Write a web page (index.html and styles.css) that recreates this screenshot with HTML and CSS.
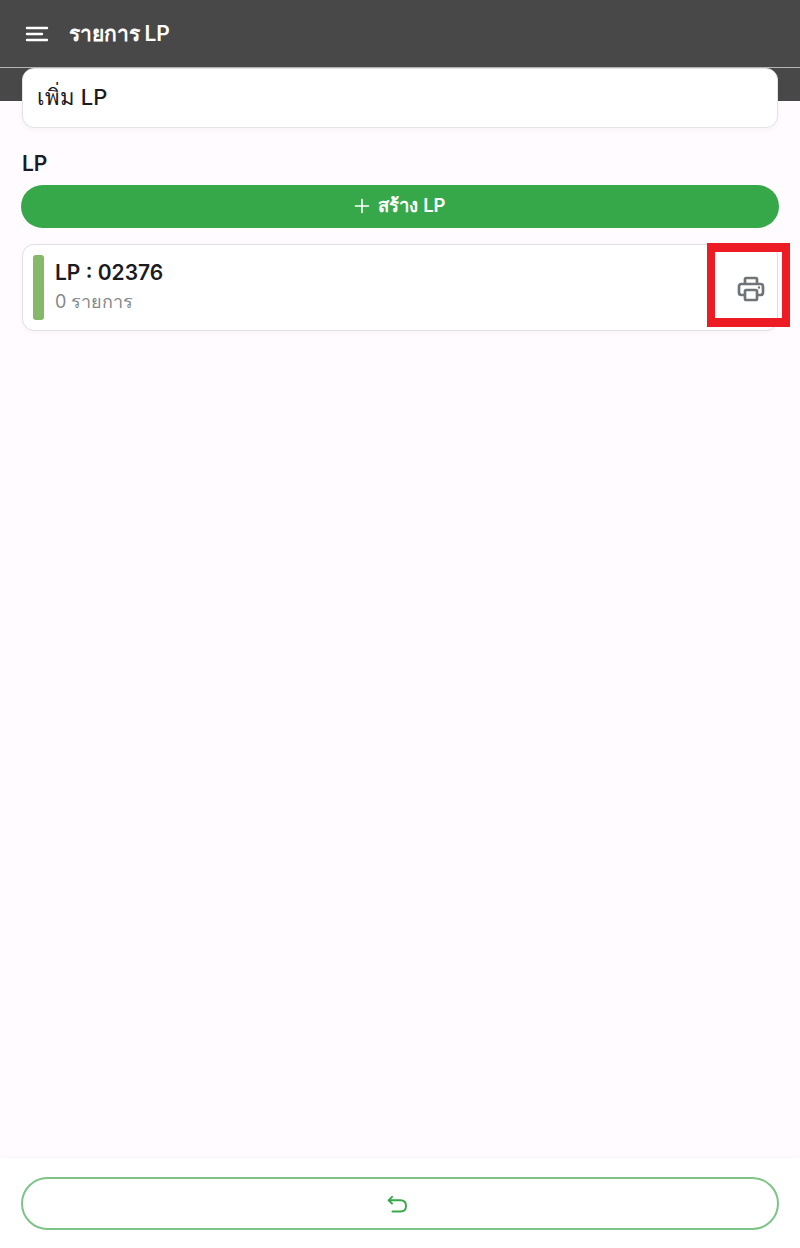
FILE: index.html
```html
<!DOCTYPE html>
<html lang="th">
<head>
    <meta charset="UTF-8">
    <meta name="viewport" content="width=device-width, initial-scale=1.0">
    <title>รายการ LP</title>
    <link rel="stylesheet" href="styles.css">
</head>
<body>
    <div class="page">
        <!-- Top bar -->
        <header class="topbar">
            <svg class="menu-icon" width="24" height="16" viewBox="0 0 24 16" fill="none" stroke="#fff" stroke-width="2.4" stroke-linecap="round">
                <path d="M2 2H22M2 8H17M2 14H22"/>
            </svg>
            <span class="topbar-title">รายการ LP</span>
        </header>
        <div class="topbar-band"></div>

        <main class="content">
            <div class="add-card">เพิ่ม LP</div>

            <h2 class="section-title">LP</h2>
            <button class="create-btn" type="button">
                <svg width="16" height="16" viewBox="0 0 16 16" fill="none" stroke="#fff" stroke-width="1.6" stroke-linecap="round">
                    <path d="M8 1.5V14.5M1.5 8H14.5"/>
                </svg>
                <span>สร้าง LP</span>
            </button>

            <!-- LP list -->
            <div class="lp-card">
                <div class="lp-bar"></div>
                <div class="lp-info">
                    <div class="lp-name">LP : 02376</div>
                    <div class="lp-count">0 รายการ</div>
                </div>
                <svg class="print-icon" width="28" height="28" viewBox="0 0 28 28" fill="none" stroke="#6f7478" stroke-width="2.7" stroke-linejoin="round">
                    <path d="M8 9V4.2C8 3.5 8.5 3 9.2 3H18.8C19.5 3 20 3.5 20 4.2V9"/>
                    <path d="M8 20H4.5C3.1 20 2 18.9 2 17.5V11.5C2 10.100 3.100 9 4.500 9H23.500C24.900 9 26 10.100 26 11.500V17.500C26 18.900 24.900 20 23.500 20H20"/>
                    <rect x="8" y="15" width="12" height="10" rx="1.200"/>
                    <circle cx="22" cy="12.500" r="0.600" fill="#6f7478" stroke-width="1.200"/>
                </svg>
                <div class="highlight-box"></div>
            </div>
        </main>

        <footer class="footer">
            <button class="back-btn" type="button">
                <svg class="back-icon" width="22" height="22" viewBox="0 0 22 22" fill="none" stroke="#37a84a" stroke-width="1.900" stroke-linecap="round" stroke-linejoin="round">
                    <path d="M5 3.800L1.600 7.300L5 10.500"/>
                    <path d="M2 7.300H13.500C17 7.300 19 9.500 19 13C19 16.300 17 18.500 13.500 18.500H5.500"/>
                </svg>
            </button>
        </footer>
    </div>
</body>
</html>
```
FILE: styles.css
```css
* {
    box-sizing: border-box;
}
body {
    margin: 0;
    font-family: Inter, "Noto Sans", sans-serif;
    background-color: #fffbff;
    color: #1c1b1f;
}
.page {
    height: 1248px;
    display: flex;
    flex-direction: column;
    overflow: hidden;
}
.topbar {
    height: 68px;
    flex-shrink: 0;
    display: flex;
    align-items: center;
    gap: 20px;
    padding-left: 25px;
    background-color: #484848;
    border-bottom: 1px solid #b5b5b5;
    color: #fff;
}
.menu-icon {
    margin-top: 1px;
}
.topbar-title {
    font-size: 21px;
    font-weight: 600;
    letter-spacing: -0.1px;
}
.topbar-band {
    height: 33px;
    flex-shrink: 0;
    background-color: #484848;
}
.content {
    flex: 1;
    margin-top: -33px;
    padding: 0 21px;
    display: flex;
    flex-direction: column;
    position: relative;
}
.add-card {
    height: 60px;
    margin: 0 1px;
    padding: 0 0 2px 14px;
    display: flex;
    align-items: center;
    background-color: #fff;
    border: 1px solid #e3e3e3;
    border-radius: 12px;
    box-shadow: 0 2px 6px rgba(0, 0, 0, 0.04);
    font-size: 22px;
    font-weight: 500;
}
.section-title {
    margin: 22px 0 7px 1px;
    font-size: 21px;
    line-height: 28px;
    font-weight: 600;
}
.create-btn {
    height: 43px;
    display: flex;
    align-items: center;
    justify-content: center;
    gap: 8px;
    padding-bottom: 3px;
    background-color: #37a84a;
    color: #fff;
    border: none;
    border-radius: 22px;
    font-family: inherit;
    font-size: 18.5px;
    font-weight: 600;
}
.lp-card {
    position: relative;
    height: 87px;
    margin: 16px 1px 0;
    padding: 10px 12px 10px 10px;
    display: flex;
    align-items: center;
    gap: 11px;
    background-color: #fff;
    border: 1px solid #e0e0e0;
    border-radius: 12px;
    box-shadow: 0 2px 6px rgba(0, 0, 0, 0.03);
}
.lp-bar {
    width: 11px;
    height: 65px;
    background-color: #85b869;
    border-radius: 3px;
}
.lp-info {
    flex: 1;
}
.lp-name {
    font-size: 21px;
    line-height: 27px;
    font-weight: 600;
}
.lp-count {
    margin-top: 1px;
    font-size: 18px;
    line-height: 30px;
    color: #85878a;
}
.print-icon {
    margin-top: 2px;
}
.highlight-box {
    position: absolute;
    left: 684px;
    top: -2px;
    width: 83px;
    height: 84px;
    border-style: solid;
    border-color: #ed1c24;
    border-width: 9px 8px;
}
.footer {
    height: 90px;
    flex-shrink: 0;
    padding: 19px 21px 18px;
    background-color: #fff;
    box-shadow: 0 -2px 6px rgba(0, 0, 0, 0.025);
}
.back-btn {
    width: 100%;
    height: 53px;
    display: flex;
    align-items: center;
    justify-content: center;
    background-color: #fff;
    border: 2px solid #7cc488;
    border-radius: 27px;
}
.back-icon {
    margin-right: 4px;
}
```
